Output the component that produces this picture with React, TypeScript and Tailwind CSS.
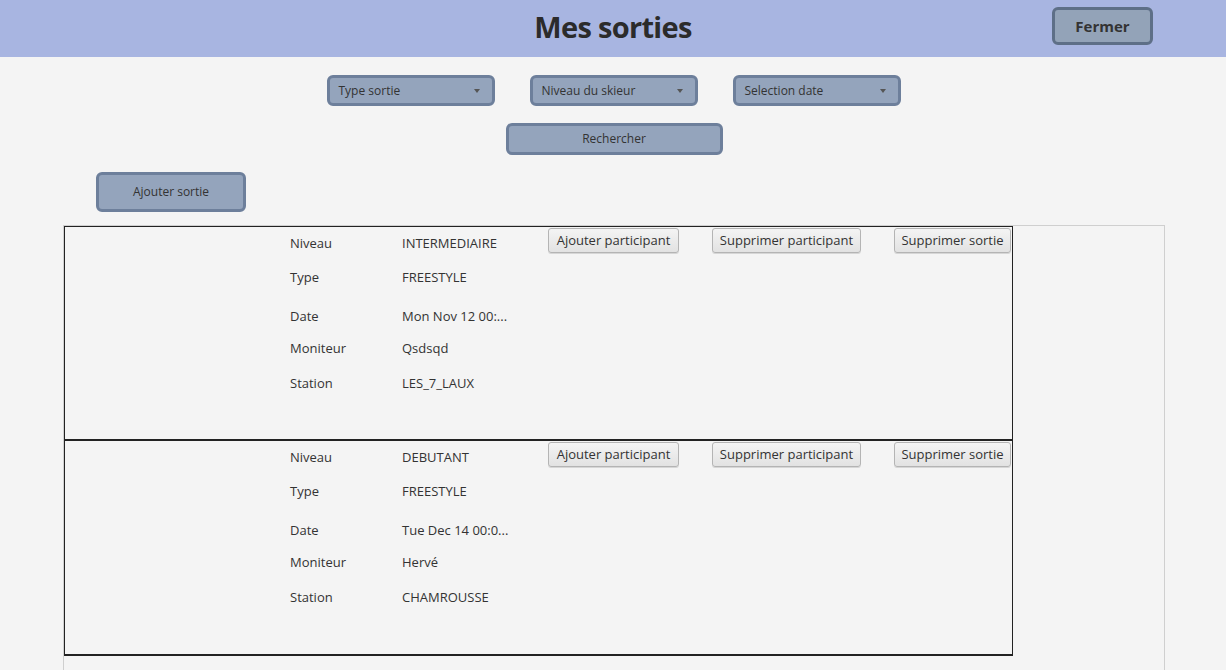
import React from 'react';

interface Sortie {
  niveau: string;
  type: string;
  date: string;
  moniteur: string;
  station: string;
}

const sorties: Sortie[] = [
  { niveau: 'INTERMEDIAIRE', type: 'FREESTYLE', date: 'Mon Nov 12 00:...', moniteur: 'Qsdsqd', station: 'LES_7_LAUX' },
  { niveau: 'DEBUTANT', type: 'FREESTYLE', date: 'Tue Dec 14 00:0...', moniteur: 'Hervé', station: 'CHAMROUSSE' },
];

const font = { fontFamily: '"Open Sans", "Noto Sans", sans-serif' };

const Dropdown: React.FC<{ label: string }> = ({ label }) => (
  <div className="flex h-[31px] w-[168px] items-center justify-between rounded-[6px] border-[3px] border-[#6d7f9b] bg-[#94a4bc] pl-[9px] pr-[12px] text-[12px] text-[#333]">
    <span>{label}</span>
    <span className="h-0 w-0 border-x-[3.5px] border-t-[4px] border-x-transparent border-t-[#555]" />
  </div>
);

const FxButton: React.FC<{ label: string; width: string }> = ({ label, width }) => (
  <button
    className={`h-[25px] ${width} rounded-[3px] border border-[#b4b4b4] bg-gradient-to-b from-[#f4f4f4] to-[#e2e2e2] text-[13px] leading-none text-[#333] shadow-[0_1px_0_#d6d6d6]`}
  >
    {label}
  </button>
);

const rows: { key: keyof Sortie; label: string; h: string }[] = [
  { key: 'niveau', label: 'Niveau', h: 'h-[34px]' },
  { key: 'type', label: 'Type', h: 'h-[34px]' },
  { key: 'date', label: 'Date', h: 'h-[44px]' },
  { key: 'moniteur', label: 'Moniteur', h: 'h-[20px]' },
  { key: 'station', label: 'Station', h: 'h-[50px]' },
];

const SortieCard: React.FC<{ sortie: Sortie; first: boolean }> = ({ sortie, first }) => (
  <div
    className={`flex h-[215px] w-[949px] border-x-[1.5px] border-b-[2px] border-[#222] ${first ? 'border-t' : ''} pl-[225px]`}
  >
    <div className="flex flex-col pt-[0px]">
      {rows.map((r) => (
        <div key={r.key} className={`flex ${r.h} items-center text-[13px] text-[#333]`}>
          <span className="w-[112px]">{r.label}</span>
          <span className="w-[146px]">{sortie[r.key]}</span>
        </div>
      ))}
    </div>
    <div className="flex gap-[33px] pt-[1px]">
      <FxButton label="Ajouter participant" width="w-[131px]" />
      <FxButton label="Supprimer participant" width="w-[149px]" />
      <FxButton label="Supprimer sortie" width="w-[117px]" />
    </div>
  </div>
);

const App: React.FC = () => {
  return (
    <div className="min-h-screen overflow-hidden bg-[#f4f4f4]" style={font}>
      <div className="grid h-[57px] grid-cols-[1fr_auto_1fr] items-start bg-[#a8b5e1]">
        <div />
        <h1 className="mt-[8px] text-[29px] font-bold leading-[38px] tracking-[-0.7px] text-[#2b2b2b]">Mes sorties</h1>
        <div className="flex justify-end pr-[73px] pt-[7px]">
          <button className="h-[38px] w-[101px] rounded-[6px] border-[3px] border-[#5e6f87] bg-[#93a3b8] text-[15px] font-bold text-[#333]">
            Fermer
          </button>
        </div>
      </div>

      <div className="mt-[18px] flex justify-center gap-[35px] pl-[1px]">
        <Dropdown label="Type sortie" />
        <Dropdown label="Niveau du skieur" />
        <Dropdown label="Selection date" />
      </div>

      <div className="mt-[17px] flex justify-center pl-[2px]">
        <button className="h-[32px] w-[217px] rounded-[6px] border-[3px] border-[#6d7f9b] bg-[#94a4bc] text-[12px] text-[#333]">
          Rechercher
        </button>
      </div>

      <div className="mt-[17px] pl-[96px]">
        <button className="h-[40px] w-[150px] rounded-[6px] border-[3px] border-[#6d7f9b] bg-[#94a4bc] text-[12px] text-[#333]">
          Ajouter sortie
        </button>
      </div>

      <div className="ml-[63px] mt-[13px] h-[460px] w-[1102px] border-x border-t border-[#cfcfcf]">
        {sorties.map((s, i) => (
          <SortieCard key={i} sortie={s} first={i === 0} />
        ))}
      </div>
    </div>
  );
};

export default App;
